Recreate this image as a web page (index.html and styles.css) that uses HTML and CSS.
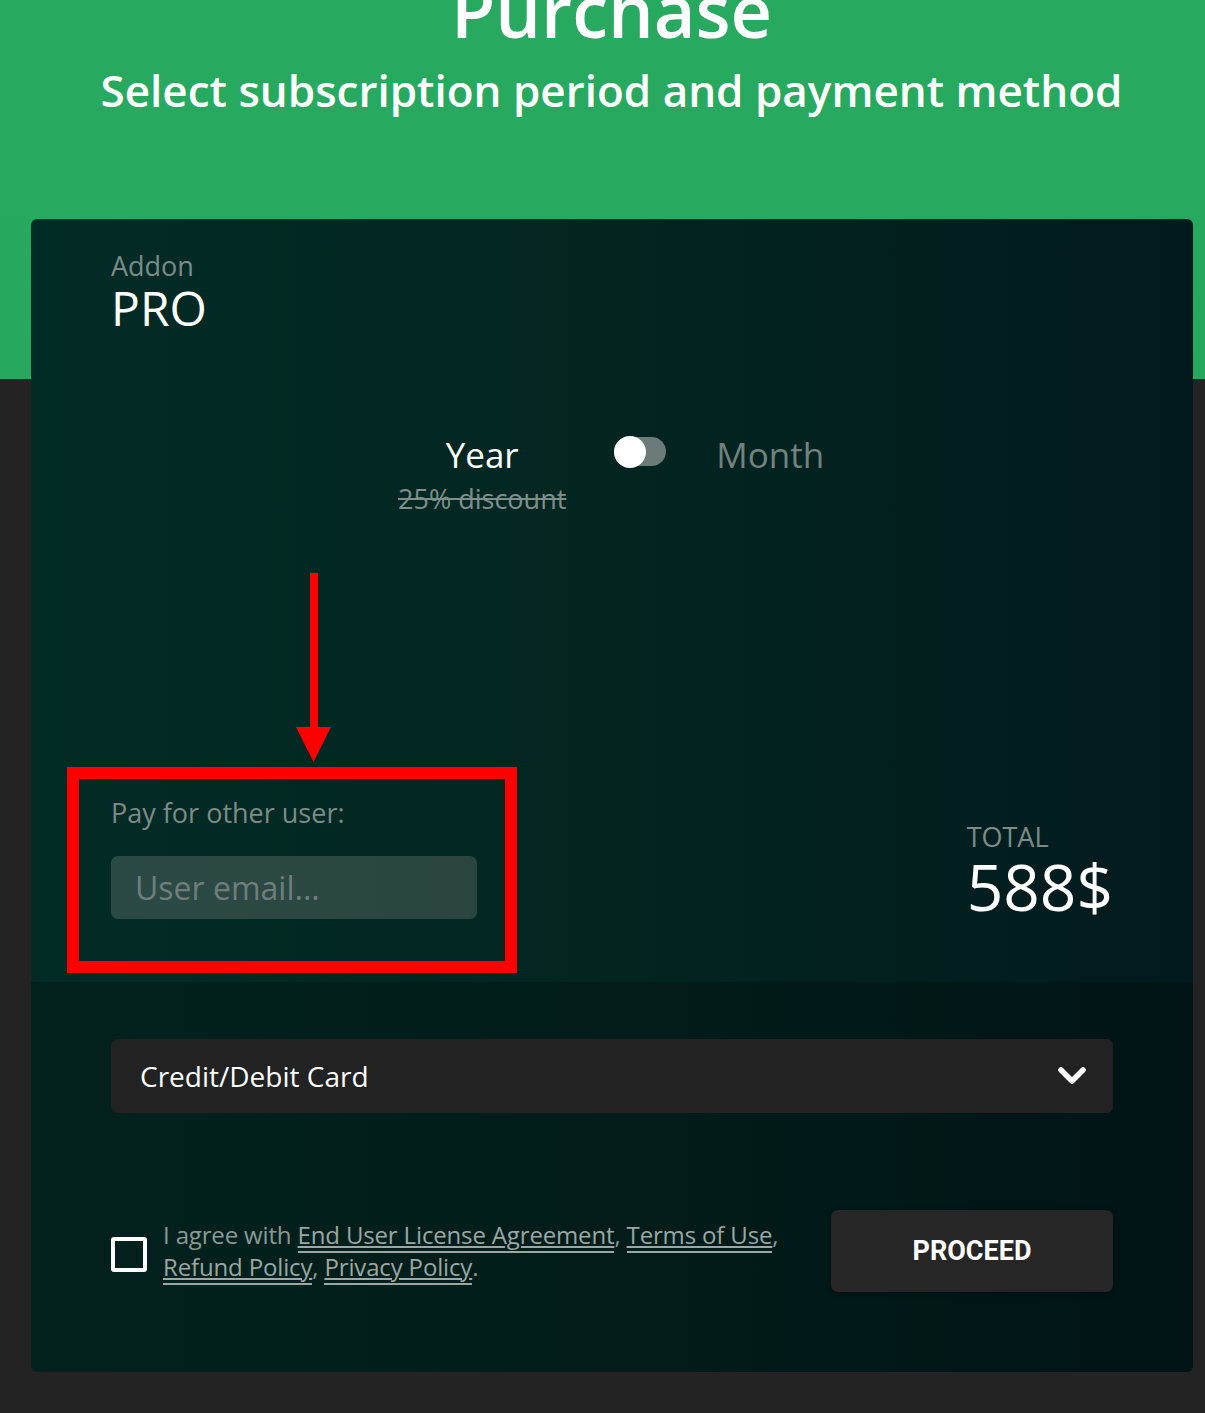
FILE: index.html
```html
<!DOCTYPE html>
<html lang="en">
<head>
<meta charset="utf-8">
<title>Purchase</title>
<link rel="stylesheet" href="styles.css">
</head>
<body>
<div class="page">
  <h1 class="title">Purchase</h1>
  <h2 class="subtitle">Select subscription period and payment method</h2>

  <div class="card">
    <div class="card-top">
      <div class="product-kind">Addon</div>
      <div class="product-name">PRO</div>

      <div class="period-row">
        <div class="period-col">
          <div class="period active">Year</div>
          <div class="discount">25% discount</div>
        </div>
        <div class="toggle"><div class="toggle-track"><div class="toggle-knob"></div></div></div>
        <div class="period inactive">Month</div>
      </div>

      <div class="pay-row">
        <div class="pay-other">
          <div class="label">Pay for other user:</div>
          <input class="email" type="text" placeholder="User email...">
        </div>
        <div class="total">
          <div class="label">TOTAL</div>
          <div class="amount">588$</div>
        </div>
      </div>
    </div>

    <div class="card-bottom">
      <div class="method">
        <span>Credit/Debit Card</span>
        <svg class="chevron" width="30" height="22" viewBox="0 0 30 22"><polyline points="4,5 15,16 26,5" fill="none" stroke="#fff" stroke-width="5.5" stroke-linecap="round" stroke-linejoin="round"/></svg>
      </div>
      <div class="agree-row">
        <div class="checkbox"></div>
        <p class="agree-text">I agree with <a href="#">End User License Agreement</a>, <a href="#">Terms of Use</a>, <a href="#">Refund Policy</a>, <a href="#">Privacy Policy</a>.</p>
        <button class="proceed">PROCEED</button>
      </div>
    </div>

    <svg class="arrow" width="40" height="192" viewBox="0 0 40 192"><rect x="16" y="0" width="8" height="158" fill="#ff0000"/><polygon points="2,154 37,154 19.5,189" fill="#ff0000"/></svg>
    <div class="highlight"></div>
  </div>
</div>
</body>
</html>
```

FILE: styles.css
```css
* { box-sizing: border-box; }
html, body { margin: 0; padding: 0; }
body {
  background: #232323;
  font-family: "Open Sans", "Noto Sans", sans-serif;
  min-height: 1413px;
}
.page {
  display: flow-root;
  background: linear-gradient(to bottom, #27aa5f 0, #26a85e 379px, #232323 379px);
  padding-bottom: 42px;
}
.title {
  margin: -33px 0 0;
  padding-left: 18px;
  text-align: center;
  color: #fff;
  font-size: 72px;
  font-weight: 600;
  line-height: 86px;
}
.subtitle {
  margin: 12px 0 0;
  padding-left: 18px;
  text-align: center;
  color: #fff;
  font-size: 44px;
  font-weight: 600;
  line-height: 50px;
}
.card {
  position: relative;
  margin: 104px 0 0 31px;
  width: 1162px;
  border-radius: 6px;
  overflow: hidden;
  background: linear-gradient(90deg, #032b25 0%, #022520 50%, #021a1d 100%);
}
.card-top {
  padding: 31px 80px 63px;
}
.product-kind {
  color: #7b8c88;
  font-size: 27px;
  line-height: 32px;
}
.product-name {
  color: #fff;
  font-size: 48px;
  line-height: 52px;
}
.period-row {
  display: flex;
  align-items: flex-start;
  margin-top: 97px;
  padding-left: 287px;
}
.period-col {
  display: flex;
  flex-direction: column;
  align-items: center;
}
.period {
  font-size: 35px;
  line-height: 48px;
}
.period.active { color: #fff; }
.period.inactive { color: #71827f; margin-left: 50px; }
.discount {
  margin-top: 3px;
  color: #7e8e8b;
  font-size: 27px;
  line-height: 34px;
  text-decoration: line-through;
  text-decoration-thickness: 2px;
}
.toggle {
  margin-left: 48px;
  margin-top: 5px;
}
.toggle-track {
  display: flex;
  align-items: center;
  width: 52px;
  height: 29px;
  margin-top: 1px;
  border-radius: 15px;
  background: #6a7b79;
}
.toggle-knob {
  width: 32px;
  height: 32px;
  border-radius: 50%;
  background: #fff;
}
.pay-row {
  display: flex;
  justify-content: space-between;
  align-items: flex-end;
  margin-top: 279px;
}
.label {
  color: #7b8c88;
  font-size: 27px;
  line-height: 36px;
}
.email {
  display: block;
  margin-top: 25px;
  width: 366px;
  height: 63px;
  padding: 0 0 0 24px;
  border: none;
  border-radius: 7px;
  background: linear-gradient(90deg, #2c4a45, #2a4540);
  color: #fff;
  font-family: "Open Sans", "Noto Sans", sans-serif;
  font-size: 32px;
  outline: none;
}
.email::placeholder { color: #6e7e7b; }
.total .label { line-height: 36px; }
.amount {
  color: #fff;
  font-size: 64px;
  line-height: 64px;
}
.card-bottom {
  background: rgba(0, 0, 0, 0.22);
  padding: 57px 80px 80px;
}
.method {
  display: flex;
  justify-content: space-between;
  align-items: center;
  height: 74px;
  padding: 0 26px 0 29px;
  border-radius: 6px;
  background: #222;
  color: #fff;
  font-size: 28px;
}
.chevron { display: block; }
.agree-row {
  display: flex;
  align-items: center;
  margin-top: 97px;
}
.checkbox {
  flex: none;
  width: 36px;
  height: 35px;
  border: 4px solid #fff;
  border-radius: 3px;
  margin-top: 7px;
}
.agree-text {
  flex: 1;
  margin: 0 28px 0 16px;
  color: #8b9996;
  font-size: 24px;
  line-height: 32px;
  letter-spacing: -0.15px;
}
.agree-text a {
  color: #9aa7a4;
  text-decoration: underline;
  text-decoration-thickness: 1.5px;
  text-underline-offset: 2px;
  border-bottom: 2px solid #9aa7a4;
}
.proceed {
  flex: none;
  width: 282px;
  height: 82px;
  border: none;
  border-radius: 7px;
  background: #262626;
  color: #fff;
  font-family: Roboto, "Liberation Sans", sans-serif;
  font-size: 27px;
  font-weight: 700;
  box-shadow: 0 2px 6px rgba(0, 0, 0, 0.25);
}
.arrow {
  position: absolute;
  left: 263px;
  top: 354px;
}
.highlight {
  position: absolute;
  left: 36px;
  top: 548px;
  width: 450px;
  height: 206px;
  border: 12px solid #ff0000;
}
```
